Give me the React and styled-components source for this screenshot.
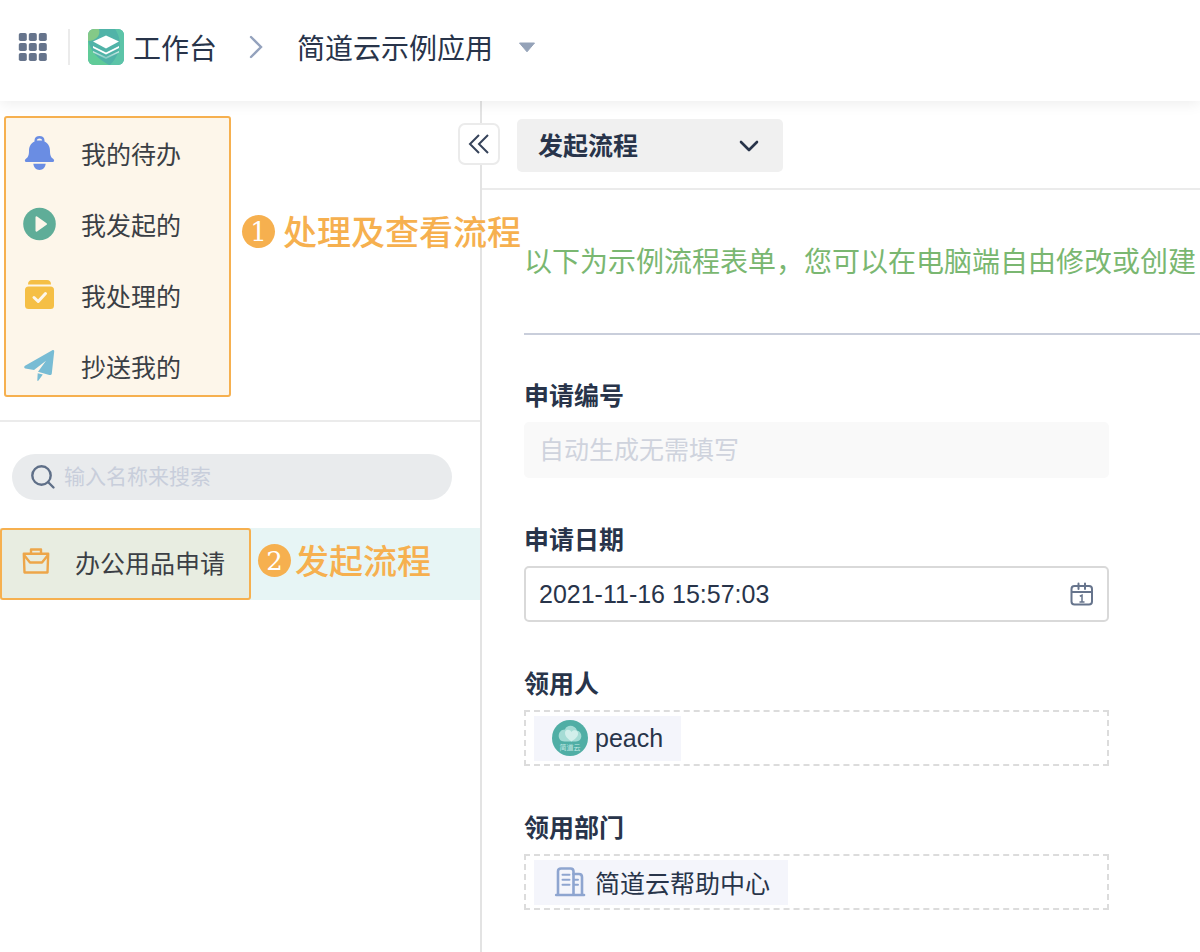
import styled, { createGlobalStyle } from "styled-components";

const GlobalStyle = createGlobalStyle`
  * {
    box-sizing: border-box;
  }
  body {
    margin: 0;
    background: #fff;
    color: #28344a;
    font-family: "Liberation Sans", "Noto Sans CJK SC", sans-serif;
    font-size: 25px;
    overflow-x: hidden;
  }
  button, input, select {
    font: inherit;
    color: inherit;
  }
  ul {
    margin: 0;
    padding: 0;
    list-style: none;
  }
`;

const menuList = [
  { id: 1, name: "我的待办", icon: BellIcon },
  { id: 2, name: "我发起的", icon: PlayIcon },
  { id: 3, name: "我处理的", icon: DoneIcon },
  { id: 4, name: "抄送我的", icon: PlaneIcon },
];

const Page = styled.div`
  min-height: 100vh;
  display: flex;
  flex-direction: column;
`;
const Header = styled.header`
  position: relative;
  z-index: 3;
  display: flex;
  align-items: center;
  height: 101px;
  padding: 0 18px 7px;
  background: #fff;
  box-shadow: 0 2px 14px rgba(0, 0, 0, 0.08);
  font-size: 28px;
`;
const IconButton = styled.button`
  display: flex;
  padding: 0;
  border: none;
  background: none;
  cursor: pointer;
`;
const HeaderDivider = styled.span`
  width: 2px;
  height: 36px;
  margin: 0 18px 0 21px;
  background: #ebebeb;
`;
const HeaderLink = styled.a`
  display: flex;
  align-items: center;
  gap: 9px;
  margin-right: 32px;
  color: inherit;
  text-decoration: none;
`;
const AppName = styled.button`
  display: flex;
  align-items: center;
  gap: 25px;
  margin-left: 34px;
  padding: 0;
  border: none;
  background: none;
  cursor: pointer;
`;
const Body = styled.div`
  flex: 1;
  display: flex;
`;
const Sidebar = styled.aside`
  position: relative;
  z-index: 2;
  flex: 0 0 482px;
  border-right: 2px solid #e3e3e3;
  color: #3b3f45;
`;
const CollapseButton = styled.button`
  position: absolute;
  top: 22px;
  right: -20px;
  display: flex;
  align-items: center;
  justify-content: center;
  width: 42px;
  height: 42px;
  padding: 0;
  border: 2px solid #ebebeb;
  border-radius: 7px;
  background: #fff;
  cursor: pointer;
`;
const MenuArea = styled.nav`
  position: relative;
  padding: 15px 4px 23px;
  border-bottom: 2px solid #ebebeb;
`;
const MenuBox = styled.ul`
  display: flex;
  flex-direction: column;
  gap: 15px;
  width: 227px;
  padding: 7px 0 1px 15px;
  border: 2px solid #f6b04f;
  border-radius: 3px;
  background: #fdf6ea;
`;
const MenuLink = styled.a`
  display: flex;
  align-items: center;
  gap: 23px;
  height: 56px;
  color: inherit;
  text-decoration: none;
`;
const Note = styled.div`
  display: flex;
  align-items: center;
  gap: ${(props) => props.$gap}px;
  color: #f6b04f;
  font-size: 34px;
  font-weight: 500;
  line-height: 48px;
  white-space: nowrap;
`;
const MenuNote = styled(Note)`
  position: absolute;
  top: 108px;
  left: 242px;
`;
const NoteNumber = styled.span`
  display: flex;
  align-items: center;
  justify-content: center;
  width: 33px;
  height: 33px;
  margin-bottom: 3px;
  border-radius: 50%;
  background: #f6b04f;
  color: #fff;
  font-family: "DejaVu Serif", serif;
  font-size: 26px;
  line-height: 32px;
`;
const SearchBox = styled.label`
  display: flex;
  align-items: center;
  gap: 8px;
  height: 46px;
  margin: 32px 28px 28px 12px;
  padding: 0 18px;
  border-radius: 23px;
  background: #e9ebed;
`;
const SearchInput = styled.input`
  flex: 1;
  min-width: 0;
  padding: 0;
  border: none;
  outline: none;
  background: none;
  font-size: 21px;
  &::placeholder {
    color: #c8cedb;
    opacity: 1;
  }
`;
const FormRow = styled.div`
  display: flex;
  align-items: center;
  gap: 7px;
  background: #e7f5f5;
  ${Note} {
    padding-bottom: 4px;
  }
`;
const FormLink = styled.a`
  display: flex;
  align-items: center;
  gap: 23px;
  height: 72px;
  padding: 0 24px 4px 18px;
  border: 2px solid #f6b04f;
  border-radius: 3px;
  background: #e8ede1;
  color: inherit;
  text-decoration: none;
  white-space: nowrap;
`;
const Main = styled.main`
  flex: 1;
  min-width: 0;
`;
const Toolbar = styled.div`
  padding: 18px 35px 16px;
  border-bottom: 2px solid #ebebeb;
`;
const SelectBox = styled.div`
  position: relative;
  width: 266px;
  svg {
    position: absolute;
    top: 20px;
    right: 24px;
    pointer-events: none;
  }
`;
const FlowSelect = styled.select`
  width: 100%;
  height: 53px;
  padding: 0 56px 0 21px;
  border: none;
  border-radius: 5px;
  background: #f0f0f0;
  font-weight: 600;
  appearance: none;
`;
const Form = styled.form`
  padding: 51px 0 40px 42px;
`;
const Tip = styled.p`
  margin: 0;
  padding-bottom: 48px;
  border-bottom: 2px solid #c9cedb;
  color: #7ab771;
  font-size: 28px;
  line-height: 44px;
  white-space: nowrap;
  overflow: hidden;
`;
const FieldList = styled.div`
  display: flex;
  flex-direction: column;
  gap: 46px;
  max-width: 585px;
  margin-top: 45px;
`;
const Field = styled.div`
  display: flex;
  flex-direction: column;
  gap: 10px;
`;
const FieldLabel = styled.label`
  font-weight: 600;
  line-height: 32px;
`;
const TextInput = styled.input`
  width: 100%;
  height: 56px;
  padding: 0 13px;
  border: 2px solid #d9d9d9;
  border-radius: 5px;
  background: #fff;
  outline: none;
  &:disabled {
    border-color: #f9f9f9;
    background: #f9f9f9;
  }
  &::placeholder {
    color: #cfd3dd;
    opacity: 1;
  }
`;
const DateBox = styled.div`
  position: relative;
  button {
    position: absolute;
    top: 16px;
    right: 15px;
  }
`;
const ChipBox = styled.div`
  display: flex;
  align-items: center;
  height: 56px;
  padding: 0 8px;
  border: 2px dashed #dcdcdc;
`;
const Chip = styled.span`
  display: flex;
  align-items: center;
  gap: 7px;
  height: 45px;
  padding: 0 18px;
  background: #f4f5fb;
`;

function GridIcon() {
  const cells = [0, 10, 20];
  return (
    <svg width="29" height="30" viewBox="0 0 29 30" fill="#66748c">
      {cells.map((y) =>
        cells.map((x) => (
          <rect key={`${x}-${y}`} x={x + 0.8} y={y + 1} width="8" height="8" rx="1.8" />
        ))
      )}
    </svg>
  );
}

function LogoIcon() {
  return (
    <svg width="36" height="36" viewBox="0 0 36 36">
      <defs>
        <clipPath id="logo-clip">
          <rect width="36" height="36" rx="6" />
        </clipPath>
        <linearGradient id="logo-fade" x1="0" y1="0" x2="0" y2="1">
          <stop offset="0" stopColor="#fff" stopOpacity="0.75" />
          <stop offset="1" stopColor="#fff" stopOpacity="0.25" />
        </linearGradient>
      </defs>
      <g clipPath="url(#logo-clip)">
        <rect width="36" height="36" fill="#50b3a8" />
        <path d="M0 11C3 24 11 30 21 36H0Z" fill="#60cb98" />
        <path d="M0 0H11C13 6 8 12 0 12Z" fill="#84c987" />
        <path d="M27 0C34 10 34 24 22 36H36V0Z" fill="#5cc4a8" />
      </g>
      <path d="M5 22L18 28L31 22V23.500L18 30L5 23.500Z" fill="url(#logo-fade)" />
      <path d="M5 17L18 23.500L31 17V19L18 25.500L5 19Z" fill="#fff" />
      <path d="M18 6.500L31 12.500L18 19.500L5 12.500Z" fill="#fff" />
    </svg>
  );
}

function BellIcon() {
  return (
    <svg width="37" height="36" viewBox="0 0 37 36" fill="#6a8de3">
      <path
        fillRule="evenodd"
        d="M13.500 5.200C13.500 2.600 15.700 1 18.500 1S23.500 2.600 23.500 5.200V6.600C27.500 8.500 29 12 29 16C29 20.500 30 22.300 32.300 24C33.800 25.300 33 27 31.500 27H5.500C4 27 3.200 25.300 4.700 24C7 22.300 8 20.500 8 16C8 12 9.500 8.500 13.500 6.600ZM15.800 5.600H21.200C21 4.200 20 3.500 18.500 3.500S16 4.200 15.800 5.600Z"
      />
      <path d="M12.300 28.800H24.700C24.300 32.300 22 35 18.500 35S12.700 32.300 12.300 28.800Z" />
    </svg>
  );
}

function PlayIcon() {
  return (
    <svg width="37" height="36" viewBox="0 0 37 36">
      <circle cx="18.500" cy="18" r="16.300" fill="#5fad98" />
      <path
        d="M15.500 11.300L25 18L15.500 24.700Z"
        fill="#fdf6ea"
        stroke="#fdf6ea"
        strokeWidth="2"
        strokeLinejoin="round"
      />
    </svg>
  );
}

function DoneIcon() {
  return (
    <svg width="37" height="36" viewBox="0 0 37 36">
      <path d="M7 7.500C7 4.500 8.500 3 11 3H26C28.500 3 30 4.500 30 7.500Z" fill="#f5bf45" />
      <rect x="4" y="9.500" width="29" height="22.500" rx="3.500" fill="#f5bf45" />
      <path
        d="M13 20.500L17.200 24.500L24.500 16.500"
        fill="none"
        stroke="#fdf6ea"
        strokeWidth="3"
        strokeLinecap="round"
        strokeLinejoin="round"
      />
    </svg>
  );
}

function PlaneIcon() {
  return (
    <svg width="37" height="36" viewBox="0 0 37 36" fill="#78bcd4">
      <path d="M33.200 3.500C33.300 2.400 32.300 1.800 31.300 2.300L4 17.800C2.800 18.500 3 20 4.300 20.400L13 22L25 12.800L17 23.800L28.300 27C29.600 27.300 30.600 26.700 30.800 25.500Z" />
      <path d="M16.700 25.300L21.800 26.500L17.500 32.500C17 33.200 16.300 33 16.300 32.200Z" />
    </svg>
  );
}

function CaseIcon() {
  return (
    <svg
      width="32"
      height="32"
      viewBox="0 0 32 32"
      fill="none"
      stroke="#eda64a"
      strokeWidth="2.400"
      strokeLinejoin="round"
    >
      <path d="M3.800 7.800H28.200L27.500 26.500H4.500Z" />
      <path d="M11 7.500V3.500H21V7.500" />
      <path d="M4 9L10 16.500H22L28 9" />
    </svg>
  );
}

function CalendarIcon() {
  return (
    <svg width="24" height="24" viewBox="0 0 24 24" fill="none" stroke="#66748c" strokeWidth="2">
      <rect x="1.500" y="4" width="20.500" height="18.500" rx="3" />
      <path d="M1.500 10H22" />
      <path d="M8.500 1.500V7M15 1.500V7" strokeLinecap="round" />
      <path d="M9.800 14.200L12 13.200V20M9.500 20H14.500" strokeWidth="1.500" />
    </svg>
  );
}

function BuildingIcon() {
  return (
    <svg
      width="36"
      height="32"
      viewBox="0 0 36 32"
      fill="none"
      stroke="#8ea5d0"
      strokeWidth="2.600"
      strokeLinecap="round"
    >
      <path d="M4.200 29H32" />
      <path d="M6 28.500V5.500C6 3.500 7 2.500 9 2.500H18.500C20.500 2.500 21.500 3.500 21.500 5.500V28.500" />
      <path d="M21.500 8H27C29 8 30 9 30 11V28.500" />
      <path d="M10.500 8.800H17.500M10.500 13.800H17.500M10.500 18.800H17.500M22 13.800H26M22 18.800H26" strokeWidth="2" />
    </svg>
  );
}

function Avatar() {
  return (
    <svg width="36" height="36" viewBox="0 0 36 36">
      <circle cx="18" cy="18" r="18" fill="#50aea5" />
      <path
        d="M12.500 21.500C4.500 21.500 5 9.500 13 9.500C14.500 4.500 23 4.500 25 10.500C31 11.500 31 21.500 24 21.500Z"
        fill="#a5dcd5"
      />
      <path d="M13 13C13 9 18 9 19.500 12C21 9 27 10 26 14.500C25 18.500 21 20 19.500 21.500C17 19.500 13 17 13 13Z" fill="#d2efeb" />
      <text
        x="18"
        y="30"
        fill="#c4e9e4"
        fontSize="7"
        textAnchor="middle"
        fontFamily="Noto Sans CJK SC, sans-serif"
      >
        简道云
      </text>
    </svg>
  );
}

function App() {
  return (
    <Page>
      <GlobalStyle />
      <Header>
        <IconButton aria-label="应用">
          <GridIcon />
        </IconButton>
        <HeaderDivider />
        <HeaderLink href="#">
          <LogoIcon />
          工作台
        </HeaderLink>
        <svg width="14" height="24" viewBox="0 0 14 24">
          <path
            d="M2 2L12 12L2 22"
            fill="none"
            stroke="#94a2bd"
            strokeWidth="2.400"
            strokeLinecap="round"
          />
        </svg>
        <AppName>
          简道云示例应用
          <svg width="18" height="11" viewBox="0 0 18 11">
            <path d="M1.500 1H16.500L9 9.800Z" fill="#94a2b8" stroke="#94a2b8" strokeLinejoin="round" />
          </svg>
        </AppName>
      </Header>
      <Body>
        <Sidebar>
          <MenuArea>
            <MenuBox>
              {menuList.map((menu) => (
                <li key={menu.id}>
                  <MenuLink href="#">
                    <menu.icon />
                    {menu.name}
                  </MenuLink>
                </li>
              ))}
            </MenuBox>
            <MenuNote $gap={8}>
              <NoteNumber>1</NoteNumber>
              处理及查看流程
            </MenuNote>
          </MenuArea>
          <SearchBox>
            <svg width="26" height="26" viewBox="0 0 26 26" fill="none" stroke="#5f6f88" strokeWidth="2.400">
              <circle cx="11.500" cy="11.500" r="9.200" />
              <path d="M18 18L23.500 23.500" strokeLinecap="round" />
            </svg>
            <SearchInput placeholder="输入名称来搜索" />
          </SearchBox>
          <FormRow>
            <FormLink href="#">
              <CaseIcon />
              办公用品申请
            </FormLink>
            <Note $gap={4}>
              <NoteNumber>2</NoteNumber>
              发起流程
            </Note>
          </FormRow>
          <CollapseButton aria-label="收起">
            <svg width="22" height="22" viewBox="0 0 22 22" fill="none" stroke="#36435a" strokeWidth="2">
              <path d="M11 2L2 11L11 20M20 2L11 11L20 20" />
            </svg>
          </CollapseButton>
        </Sidebar>
        <Main>
          <Toolbar>
            <SelectBox>
              <FlowSelect aria-label="流程">
                <option>发起流程</option>
              </FlowSelect>
              <svg width="20" height="14" viewBox="0 0 20 14">
                <path
                  d="M2 3L10 11L18 3"
                  fill="none"
                  stroke="#28344a"
                  strokeWidth="2.600"
                  strokeLinecap="round"
                  strokeLinejoin="round"
                />
              </svg>
            </SelectBox>
          </Toolbar>
          <Form>
            <Tip>以下为示例流程表单，您可以在电脑端自由修改或创建</Tip>
            <FieldList>
              <Field>
                <FieldLabel htmlFor="number">申请编号</FieldLabel>
                <TextInput id="number" placeholder="自动生成无需填写" disabled />
              </Field>
              <Field>
                <FieldLabel htmlFor="date">申请日期</FieldLabel>
                <DateBox>
                  <TextInput id="date" defaultValue="2021-11-16 15:57:03" />
                  <IconButton type="button" aria-label="选择日期">
                    <CalendarIcon />
                  </IconButton>
                </DateBox>
              </Field>
              <Field>
                <FieldLabel as="span">领用人</FieldLabel>
                <ChipBox>
                  <Chip>
                    <Avatar />
                    peach
                  </Chip>
                </ChipBox>
              </Field>
              <Field>
                <FieldLabel as="span">领用部门</FieldLabel>
                <ChipBox>
                  <Chip>
                    <BuildingIcon />
                    简道云帮助中心
                  </Chip>
                </ChipBox>
              </Field>
            </FieldList>
          </Form>
        </Main>
      </Body>
    </Page>
  );
}

export default App;
